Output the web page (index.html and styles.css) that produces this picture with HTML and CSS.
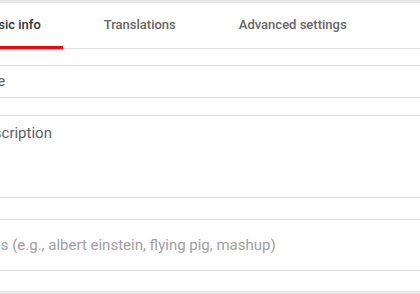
FILE: index.html
```html
<!DOCTYPE html>
<html lang="en">
<head>
    <meta charset="UTF-8">
    <meta name="viewport" content="width=device-width, initial-scale=1.0">
    <title>Video details</title>
    <link rel="stylesheet" href="styles.css">
</head>
<body>
    <div class="card">
        <div class="tabs">
            <div class="tab active">Basic info</div>
            <div class="tab">Translations</div>
            <div class="tab">Advanced settings</div>
        </div>
        <div class="form">
            <div class="field title-field">Title</div>
            <div class="field desc-field">Description</div>
            <div class="field tags-field">Tags (e.g., albert einstein, flying pig, mashup)</div>
        </div>
    </div>
</body>
</html>
```

FILE: styles.css
```css
html, body {
    margin: 0;
    overflow: hidden;
}
body {
    font-family: Roboto, "Liberation Sans", sans-serif;
    background-color: #e6e6e6;
    height: 294px;
}
.card {
    background-color: #fff;
    margin: 3px 0 0 -40px;
    width: 520px;
    height: 288px;
}
.tabs {
    display: flex;
    gap: 19px;
    padding-left: 1px;
    border-bottom: 1px solid #e2e2e2;
    height: 45px;
}
.tab {
    padding: 0 22px;
    font-size: 13px;
    font-weight: 500;
    color: #666;
    display: flex;
    align-items: center;
    border-bottom: 3px solid transparent;
    margin-bottom: -1px;
}
.tab.active {
    color: #333;
    border-bottom-color: #f00;
}
.form {
    padding: 16px 0 20px;
}
.field {
    border: 1px solid #dcdcdc;
    font-size: 15px;
    color: #606060;
    padding-left: 15px;
}
.title-field {
    height: 31px;
    line-height: 31px;
    margin-bottom: 17px;
}
.desc-field {
    height: 73px;
    padding-top: 8px;
    margin-bottom: 21px;
}
.tags-field {
    height: 50px;
    line-height: 50px;
    color: #a0a0a0;
}
```
